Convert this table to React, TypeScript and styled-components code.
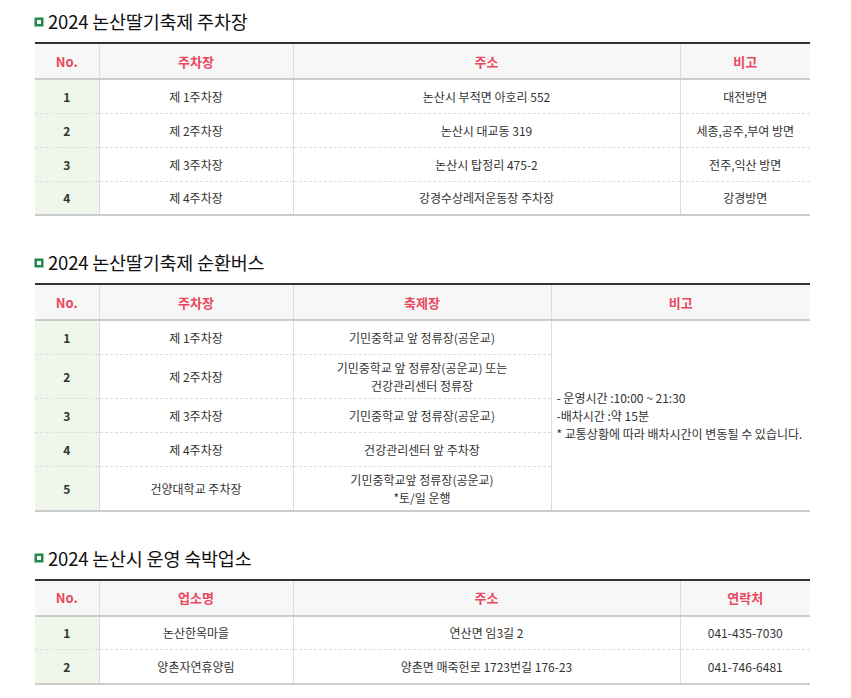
import styled, { createGlobalStyle } from 'styled-components';

const GlobalStyle = createGlobalStyle`
  body {
    margin: 0;
    background: #fff;
    font-family: "Noto Sans CJK KR", "Noto Sans", sans-serif;
    color: #333;
  }
`;

type Section = {
  title: string;
  cols: { label: string; width: number }[];
  rows: string[][];
  note?: string[];
};

const parking: Section = {
  title: '2024 논산딸기축제 주차장',
  cols: [
    { label: 'No.', width: 64 },
    { label: '주차장', width: 194 },
    { label: '주소', width: 387 },
    { label: '비고', width: 130 },
  ],
  rows: [
    ['1', '제 1주차장', '논산시 부적면 아호리 552', '대전방면'],
    ['2', '제 2주차장', '논산시 대교동 319', '세종,공주,부여 방면'],
    ['3', '제 3주차장', '논산시 탑정리 475-2', '전주,익산 방면'],
    ['4', '제 4주차장', '강경수상레저운동장 주차장', '강경방면'],
  ],
};

const shuttle: Section = {
  title: '2024 논산딸기축제 순환버스',
  cols: [
    { label: 'No.', width: 64 },
    { label: '주차장', width: 194 },
    { label: '축제장', width: 258 },
    { label: '비고', width: 259 },
  ],
  rows: [
    ['1', '제 1주차장', '기민중학교 앞 정류장(공운교)'],
    ['2', '제 2주차장', '기민중학교 앞 정류장(공운교) 또는\n건강관리센터 정류장'],
    ['3', '제 3주차장', '기민중학교 앞 정류장(공운교)'],
    ['4', '제 4주차장', '건강관리센터 앞 주차장'],
    ['5', '건양대학교 주차장', '기민중학교앞 정류장(공운교)\n*토/일 운행'],
  ],
  note: [
    '- 운영시간 :10:00 ~ 21:30',
    '-배차시간 :약 15분',
    '* 교통상황에 따라 배차시간이 변동될 수 있습니다.',
  ],
};

const lodging: Section = {
  title: '2024 논산시 운영 숙박업소',
  cols: [
    { label: 'No.', width: 64 },
    { label: '업소명', width: 194 },
    { label: '주소', width: 387 },
    { label: '연락처', width: 130 },
  ],
  rows: [
    ['1', '논산한옥마을', '연산면 임3길 2', '041-435-7030'],
    ['2', '양촌자연휴양림', '양촌면 매죽헌로 1723번길 176-23', '041-746-6481'],
  ],
};

function InfoTable({ section }: { section: Section }) {
  return (
    <Block>
      <Title>
        <Bullet />
        {section.title}
      </Title>
      <Table>
        <colgroup>
          {section.cols.map((c) => (
            <col key={c.label} style={{ width: c.width }} />
          ))}
        </colgroup>
        <thead>
          <tr>
            {section.cols.map((c) => (
              <Th key={c.label}>{c.label}</Th>
            ))}
          </tr>
        </thead>
        <tbody>
          {section.rows.map((row, i) => (
            <tr key={row[0]}>
              <NumCell>{row[0]}</NumCell>
              {row.slice(1).map((cell, j) => (
                <Td key={j}>
                  {cell.split('\n').map((line, k) => (
                    <Line key={k}>{line}</Line>
                  ))}
                </Td>
              ))}
              {section.note && i === 0 && (
                <NoteCell rowSpan={section.rows.length}>
                  {section.note.map((line) => (
                    <Line key={line}>{line}</Line>
                  ))}
                </NoteCell>
              )}
            </tr>
          ))}
        </tbody>
      </Table>
    </Block>
  );
}

export default function App() {
  return (
    <>
      <GlobalStyle />
      <Page>
        <InfoTable section={parking} />
        <InfoTable section={shuttle} />
        <InfoTable section={lodging} />
      </Page>
    </>
  );
}

const Page = styled.div`
  width: 775px;
  padding: 8px 0 0 35px;
  display: flex;
  flex-direction: column;
  gap: 33px;
`;

const Block = styled.section`
  display: flex;
  flex-direction: column;
  gap: 8px;
`;

const Title = styled.h2`
  margin: 0;
  height: 26px;
  display: flex;
  align-items: center;
  gap: 5px;
  font-size: 18.5px;
  font-weight: 400;
  color: #111;
  letter-spacing: -0.2px;
`;

const Bullet = styled.span`
  width: 8px;
  height: 8px;
  box-sizing: border-box;
  border: 2.5px solid #1f8a4c;
  background: #fff;
  box-shadow: 0 0 0 0.5px #1f8a4c;
  margin-top: 1px;
`;

const Table = styled.table`
  width: 775px;
  table-layout: fixed;
  border-collapse: collapse;
  border-top: 2px solid #333;
  font-size: 12px;

  tbody tr:last-child td {
    border-bottom: 2px solid #ccc;
  }
`;

const Th = styled.th`
  height: 34px;
  padding: 0;
  background: #f7f7f7;
  color: #e9475f;
  font-size: 13px;
  font-weight: 700;
  border-bottom: 2px solid #ccc;
  border-left: 1px solid #ddd;

  &:first-child {
    border-left: none;
  }
`;

const Td = styled.td`
  height: 34px;
  box-sizing: border-box;
  padding: 4px 6px 3px;
  text-align: center;
  line-height: 18px;
  color: #333;
  border-bottom: 1px dashed #ddd;
  border-left: 1px solid #ddd;
`;

const NumCell = styled(Td)`
  background: #f1f6ea;
  font-weight: 700;
  border-left: none;
`;

const NoteCell = styled(Td)`
  text-align: left;
  padding-left: 5px;
  vertical-align: middle;
  border-bottom: 2px solid #ccc;
`;

const Line = styled.div``;
